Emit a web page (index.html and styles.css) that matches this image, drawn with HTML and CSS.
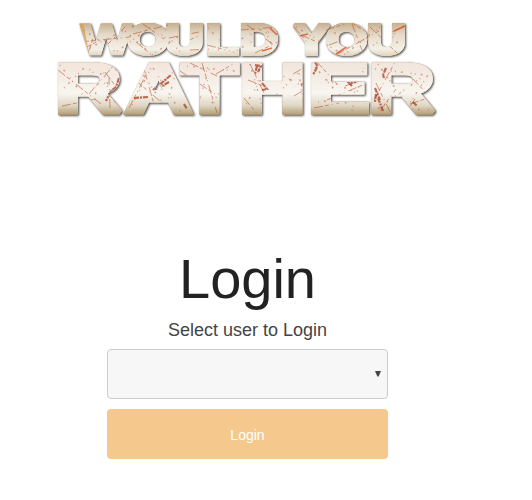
FILE: index.html
```
<!DOCTYPE html>
<html lang="en">
<head>
<meta charset="utf-8">
<title>Would You Rather</title>
<link rel="stylesheet" href="styles.css">
</head>
<body>
<main class="page">
  <svg class="logo" viewBox="50 15 395 108" role="img" aria-label="Would You Rather">
    <defs>
      <linearGradient id="top" gradientUnits="userSpaceOnUse" x1="0" y1="22" x2="0" y2="58">
        <stop offset="0" stop-color="#c3ab8a"/><stop offset=".35" stop-color="#e5dac9"/><stop offset=".75" stop-color="#f4f0e8"/><stop offset="1" stop-color="#dacdb0"/>
      </linearGradient>
      <linearGradient id="bottom" gradientUnits="userSpaceOnUse" x1="0" y1="61" x2="0" y2="115">
        <stop offset="0" stop-color="#f1e4da"/><stop offset=".6" stop-color="#f8f5f0"/><stop offset=".82" stop-color="#e0d7c5"/><stop offset="1" stop-color="#b29c74"/>
      </linearGradient>
      <mask id="letters" maskUnits="userSpaceOnUse" x="50" y="15" width="395" height="108">
        <use href="#words" class="mask-words"/>
      </mask>
    </defs>
    <g class="shadow">
      <use href="#words" class="rim"/>
      <g id="words">
        <text class="word small" transform="scale(1.22 1)" x="66.8 104.5 135.7 169 196.7" y="54"><tspan class="narrow">W</tspan>OULD</text>
        <text class="word small" transform="scale(1.22 1)" x="241 267.5 301.4" y="54">YOU</text>
        <text class="word large" transform="scale(1.32 1)" x="42.1 95.3 137.6 181.5 233.8 279.3" y="111.6">RATHER</text>
      </g>
    </g>
    <g mask="url(#letters)">
      <path class="scratch" d="M80 42l50-5M83 49l17-9M105 47l20-20M88 53l8-23M133 34l35-9M143 24l21 15M136 42l17 14M169 38l30-6M180 44l21-9M190 50l23-1M207 45l23 6M240 30l38-3M247 25l27 20M255 53l25-12M294 27l15 17M301 35l14 6M326 30l25-8 19 13M336 55l43-24M352 24l12 31M370 27l29 28M392 32l15-7M329 45l16-6M58 70l43 34M62 106l34-7M89 94l25-29M105 72l15 20M110 108l-1-30M129 108l18-35M135 80l31 26M143 65l12 43M156 90l24-25M180 71l35 23M190 63l27 13M202 63l15 50M216 74l17-10M244 98l14 17M250 64l14 29M248 80l20 8M294 96l17-10M293 74l19-11M316 61l22 24M327 100l38-16M345 86l21-7M314 108l25-5M374 100l21-38M376 83l15 31M380 111l16-22M412 78l21 22M410 104l24-8M415 99l-8 12"/>
      <path class="splash" d="M114 64l2 4 1-4M119 78l-3 9-5 4M111 91l-5 10M134 98l14-1M153 90l18-15M169 82l-9 5M184 104l3 5M255 65l6 1-3 6M257 66l-2 8M262 83l5 6-5 1M301 85l8-5M315 62l3 5M317 67l-4 8M352 86l-3-3 7-1M386 68l-3 7M383 75l1 3M375 88l5 12M378 98l5 13M376 94l-1 8M413 102l4 4"/>
      <path class="bright" d="M299 36l9-2M394 31l11-5M336 54l12-8M262 51l10-3M270 28l7 7"/>
      <path class="specks" d="M60 65l32 42 10-38 16 41M132 105l20-39 29 47M187 66l48 5-26 36M250 64l13 45 36-37 5 38M315 67l37 43 12-42M375 69l50 6-46 33 53 2M84 30l32 22 36-26 30 27M208 28l24 25 40-23M296 27l48 28 39-30 18 22M64 88l22-22 30 28M140 70l26 38 12-44M198 104l12-38M246 104l22-36 38 20M318 102l46-6-42-18M378 64l30 42 22-34M90 48l34-18 28 25 40-28M218 50l46-22 12 26M330 28l26 26 42-22"/>
      <path class="tan-edge" d="M78 22l5 0 6 31-4 1z"/>
    </g>
  </svg>

  <h1 class="title">Login</h1>
  <form class="login-form">
    <label class="prompt" for="user">Select user to Login</label>
    <div class="select-wrap">
      <select class="user-select" id="user"></select>
      <svg class="arrow" viewBox="0 0 6 6" aria-hidden="true"><path d="M0 0h6L3.6 5.5H2.4z"/></svg>
    </div>
    <button class="submit" type="button">Login</button>
  </form>
</main>
</body>
</html>
```

FILE: styles.css
```
body {
  margin: 0;
  background: #fff;
  font-family: "Liberation Sans", Arial, sans-serif;
}
.page {
  width: 495px;
  height: 500px;
  padding-top: 15px;
  box-sizing: border-box;
  display: flex;
  flex-direction: column;
  align-items: center;
}
.logo {
  display: block;
  width: 395px;
  height: 108px;
  flex: none;
  overflow: visible;
}
.shadow {
  filter: drop-shadow(1.5px 1.5px 1px rgba(45, 40, 35, .85));
}
.word {
  font-family: "Liberation Sans", Arial, sans-serif;
  font-weight: 700;
  stroke-miterlimit: 2;
}
.small {
  font-size: 43px;
  fill: url(#top);
  stroke: url(#top);
  stroke-width: 4px;
}
.narrow {
  stroke-width: 2.6px;
}
.large {
  font-size: 69px;
  fill: url(#bottom);
  stroke: url(#bottom);
  stroke-width: 5px;
}
.rim {
  filter: drop-shadow(0 0 .6px #b08a55);
}
.mask-words {
  filter: brightness(3);
}
.scratch {
  fill: none;
  stroke: #b9532e;
  stroke-width: .9px;
  stroke-dasharray: 9 2 4 3 1 4;
  opacity: .65;
}
.splash {
  fill: none;
  stroke: #a93d20;
  stroke-width: 2.2px;
  stroke-dasharray: 5 1 2 1;
  opacity: .75;
}
.bright {
  fill: none;
  stroke: #dc4a20;
  stroke-width: 1.6px;
  opacity: .75;
}
.specks {
  fill: none;
  stroke: #b46a49;
  stroke-width: 1.5px;
  stroke-dasharray: 1 5 2 8 1 3;
  opacity: .55;
}
.tan-edge {
  fill: #d4a04e;
  opacity: .75;
}
.title {
  margin: 124px 0 0;
  font-size: 56px;
  line-height: 64px;
  font-weight: 400;
  color: #222;
}
.login-form {
  width: 281px;
  display: flex;
  flex-direction: column;
}
.prompt {
  margin-top: 8px;
  height: 30px;
  font-size: 18px;
  line-height: 22px;
  text-align: center;
  color: #444;
}
.select-wrap {
  display: grid;
  align-items: center;
  justify-items: end;
}
.user-select,
.arrow {
  grid-area: 1 / 1;
}
.user-select {
  appearance: none;
  width: 100%;
  height: 50px;
  border: 1px solid #ccc;
  border-radius: 4px;
  background: #f7f7f7;
}
.arrow {
  width: 6px;
  height: 6px;
  margin-right: 7px;
  fill: #444;
  pointer-events: none;
}
.submit {
  height: 50px;
  margin-top: 10px;
  padding: 2px 0 0;
  border: 0;
  border-radius: 4px;
  background: #f5c98e;
  color: #fff;
  font: 14px "Liberation Sans", Arial, sans-serif;
}
```
